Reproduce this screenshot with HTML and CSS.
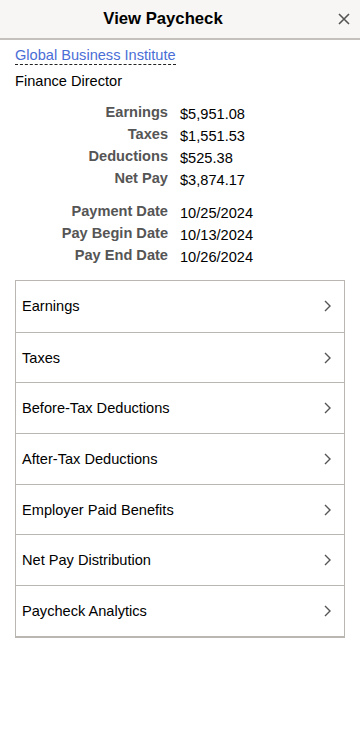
FILE: index.html
```
<!DOCTYPE html>
<html lang="en">
<head>
    <meta charset="UTF-8">
    <meta name="viewport" content="width=device-width, initial-scale=1.0">
    <title>View Paycheck</title>
    <link rel="stylesheet" href="styles.css">
</head>
<body>
    <div class="header">
        <h1 class="header-title">View Paycheck</h1>
        <button class="close-btn" aria-label="Close">
            <svg width="12" height="12" viewBox="0 0 12 12"><path d="M1 1L11 11M11 1L1 11" stroke="#555" stroke-width="1.6"/></svg>
        </button>
    </div>

    <div class="content">
        <a href="#" class="company">Global Business Institute</a>
        <div class="job-title">Finance Director</div>

        <div class="summary">
            <div class="label">Earnings</div><div class="value">$5,951.08</div>
            <div class="label">Taxes</div><div class="value">$1,551.53</div>
            <div class="label">Deductions</div><div class="value">$525.38</div>
            <div class="label">Net Pay</div><div class="value">$3,874.17</div>
        </div>

        <div class="summary dates">
            <div class="label">Payment Date</div><div class="value">10/25/2024</div>
            <div class="label">Pay Begin Date</div><div class="value">10/13/2024</div>
            <div class="label">Pay End Date</div><div class="value">10/26/2024</div>
        </div>

        <ul class="list">
            <li class="list-item">Earnings<svg class="chevron" width="7" height="12" viewBox="0 0 7 12"><path d="M1 1L6 6L1 11" fill="none" stroke="#555" stroke-width="1.4"/></svg></li>
            <li class="list-item">Taxes<svg class="chevron" width="7" height="12" viewBox="0 0 7 12"><path d="M1 1L6 6L1 11" fill="none" stroke="#555" stroke-width="1.4"/></svg></li>
            <li class="list-item">Before-Tax Deductions<svg class="chevron" width="7" height="12" viewBox="0 0 7 12"><path d="M1 1L6 6L1 11" fill="none" stroke="#555" stroke-width="1.4"/></svg></li>
            <li class="list-item">After-Tax Deductions<svg class="chevron" width="7" height="12" viewBox="0 0 7 12"><path d="M1 1L6 6L1 11" fill="none" stroke="#555" stroke-width="1.4"/></svg></li>
            <li class="list-item">Employer Paid Benefits<svg class="chevron" width="7" height="12" viewBox="0 0 7 12"><path d="M1 1L6 6L1 11" fill="none" stroke="#555" stroke-width="1.4"/></svg></li>
            <li class="list-item">Net Pay Distribution<svg class="chevron" width="7" height="12" viewBox="0 0 7 12"><path d="M1 1L6 6L1 11" fill="none" stroke="#555" stroke-width="1.4"/></svg></li>
            <li class="list-item">Paycheck Analytics<svg class="chevron" width="7" height="12" viewBox="0 0 7 12"><path d="M1 1L6 6L1 11" fill="none" stroke="#555" stroke-width="1.4"/></svg></li>
        </ul>
    </div>
</body>
</html>
```

FILE: styles.css
```
:root {
    --text: #000;
    --label: #555;
    --link: #4a6ed6;
    --border: #bab6b1;
    --header-bg: #f7f6f4;
}

body {
    margin: 0;
    font-family: 'Liberation Sans', Arial, sans-serif;
    color: var(--text);
    background: white;
}

.header {
    height: 38px;
    background: var(--header-bg);
    border-bottom: 2px solid #c4c1bd;
    display: flex;
    align-items: center;
}

.header-title {
    flex: 1;
    margin: 0;
    text-align: center;
    font-size: 16.7px;
    font-weight: 700;
}

.close-btn {
    width: 34px;
    height: 38px;
    padding: 0 0 0 2px;
    border: none;
    background: none;
    display: flex;
    align-items: center;
    justify-content: center;
    flex-shrink: 0;
}

.content {
    padding: 6px 15px 0;
}

.company {
    display: inline-block;
    color: var(--link);
    font-size: 14.6px;
    line-height: 16px;
    text-decoration: none;
    border-bottom: 1px dashed #222;
    padding-bottom: 1px;
}

.job-title {
    margin-top: 8px;
    font-size: 14.6px;
    line-height: 16px;
}

.summary {
    display: grid;
    grid-template-columns: 153px auto;
    column-gap: 12px;
    row-gap: 3.5px;
    margin-top: 15px;
    font-size: 14.6px;
    line-height: 16.5px;
}

.summary.dates {
    margin-top: 14px;
}

.label {
    text-align: right;
    font-weight: 700;
    color: var(--label);
}

.value {
    padding-top: 2px;
}

.list {
    list-style: none;
    margin: 15px 0 0;
    padding: 0;
    border: 1px solid var(--border);
    border-bottom-width: 2px;
}

.list-item {
    display: flex;
    align-items: center;
    justify-content: space-between;
    height: 49.7px;
    padding: 0 13px 0 6px;
    font-size: 14.6px;
    border-top: 1px solid var(--border);
}

.list-item:first-child {
    border-top: none;
    height: 50.7px;
}
```
